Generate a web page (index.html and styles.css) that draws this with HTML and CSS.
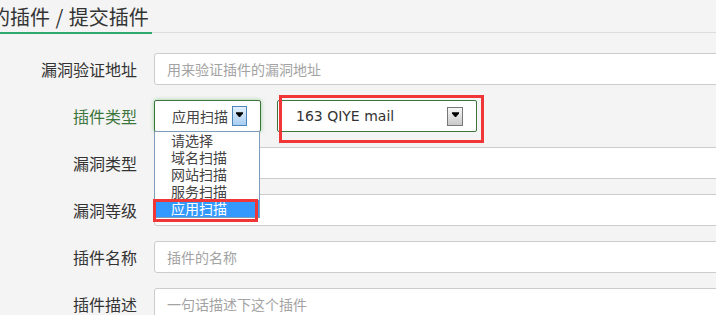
FILE: index.html
```html
<!DOCTYPE html>
<html lang="zh-CN">
<head>
    <meta charset="UTF-8">
    <meta name="viewport" content="width=device-width, initial-scale=1.0">
    <title>提交插件</title>
    <link rel="stylesheet" href="styles.css">
</head>
<body>
    <div class="page-header">
        <span class="page-title">我的插件 / 提交插件</span>
    </div>

    <form class="plugin-form">
        <div class="form-row">
            <label>漏洞验证地址</label>
            <div class="form-control placeholder">用来验证插件的漏洞地址</div>
        </div>

        <div class="form-row has-success">
            <label>插件类型</label>
            <div class="select-box type-select">
                <span class="select-text">应用扫描</span>
                <span class="select-arrow blue">
                    <svg width="7" height="5" viewBox="0 0 7 5"><path d="M0 0h7M0 1h7L3.5 5z" stroke="#000" stroke-width="1" fill="#000"/></svg>
                </span>
                <ul class="select-list">
                    <li>请选择</li>
                    <li>域名扫描</li>
                    <li>网站扫描</li>
                    <li>服务扫描</li>
                    <li class="selected">应用扫描<span class="mark mark-item"></span></li>
                </ul>
            </div>
            <div class="select-box mail-select">
                <span class="select-text latin">163 QIYE mail</span>
                <span class="select-arrow gray">
                    <svg width="7" height="5" viewBox="0 0 7 5"><path d="M0 0h7M0 1h7L3.5 5z" stroke="#000" stroke-width="1" fill="#000"/></svg>
                </span>
                <span class="mark mark-mail"></span>
            </div>
        </div>

        <div class="form-row">
            <label>漏洞类型</label>
            <div class="form-control"></div>
        </div>

        <div class="form-row">
            <label>漏洞等级</label>
            <div class="form-control"></div>
        </div>

        <div class="form-row">
            <label>插件名称</label>
            <div class="form-control placeholder">插件的名称</div>
        </div>

        <div class="form-row">
            <label>插件描述</label>
            <div class="form-control placeholder">一句话描述下这个插件</div>
        </div>
    </form>
</body>
</html>
```

FILE: styles.css
```css
body {
    margin: 0;
    padding: 0;
    background-color: #f4f4f4;
    font-family: "Noto Sans CJK SC", "Noto Sans", sans-serif;
    color: #333;
    overflow: hidden;
}

.page-header {
    height: 32px;
    border-bottom: 1px solid #dedede;
    white-space: nowrap;
}

.page-title {
    display: inline-block;
    height: 30px;
    padding-top: 2px;
    margin-left: -30px;
    padding-right: 3px;
    margin-bottom: -2px;
    font-size: 20px;
    line-height: 30px;
    word-spacing: 1px;
    color: #333;
    border-bottom: 2px solid #2eaa6e;
}

.plugin-form {
    padding-top: 20px;
}

.form-row {
    display: flex;
    align-items: center;
    margin-bottom: 15px;
}

.form-row label {
    width: 137px;
    margin-right: 17px;
    flex-shrink: 0;
    text-align: right;
    font-size: 16px;
    color: #333;
}

.has-success label {
    color: #3c763d;
}

.form-control {
    box-sizing: border-box;
    width: 620px;
    height: 32px;
    flex-shrink: 0;
    padding: 0 12px;
    background-color: #fff;
    border: 1px solid #cccccc;
    border-radius: 3px;
    font-size: 14px;
    line-height: 30px;
}

.placeholder {
    color: #a3a3a3;
}

.select-box {
    position: relative;
    box-sizing: border-box;
    height: 32px;
    display: flex;
    align-items: center;
    background-color: #fff;
    border: 1px solid #3c763d;
    border-radius: 2px;
}

.type-select {
    width: 107px;
    padding-left: 17px;
    box-shadow: 0 0 4px rgba(103, 177, 104, 0.6);
}

.mail-select {
    width: 200px;
    margin-left: 16px;
    padding-left: 18px;
}

.select-text {
    font-size: 14px;
    color: #444;
}

.select-text.latin {
    font-family: "DejaVu Sans", Verdana, sans-serif;
    font-size: 14px;
    color: #333;
}

.select-arrow {
    box-sizing: border-box;
    display: flex;
    align-items: center;
    justify-content: center;
    margin-left: auto;
}

.select-arrow.blue {
    width: 15px;
    height: 20px;
    margin-right: 13px;
    border: 1px solid #4b86bd;
    background: linear-gradient(#e4f0fc, #a9cdf2);
    padding-bottom: 4px;
}

.select-arrow.gray {
    width: 16px;
    height: 19px;
    margin-right: 13px;
    border: 1px solid #777;
    background: linear-gradient(#f6f6f6, #c9c9c9);
    padding-bottom: 3px;
}

.select-list {
    position: absolute;
    top: 100%;
    left: -1px;
    width: 106px;
    margin: 0;
    padding: 0;
    list-style: none;
    box-sizing: border-box;
    background-color: #fff;
    border: 1px solid #7f9db9;
    z-index: 2;
}

.select-list li {
    position: relative;
    height: 17px;
    padding-left: 16px;
    font-size: 14px;
    line-height: 17px;
    color: #444;
}

.select-list li.selected {
    background-color: #3399ff;
    color: #fff;
}

.mark {
    position: absolute;
    box-sizing: border-box;
    border: 3px solid #f03636;
}

.mark-item {
    left: -2px;
    top: -1px;
    width: 105px;
    height: 23px;
}

.mark-mail {
    left: 1px;
    top: -6px;
    width: 205px;
    height: 48px;
}
```
